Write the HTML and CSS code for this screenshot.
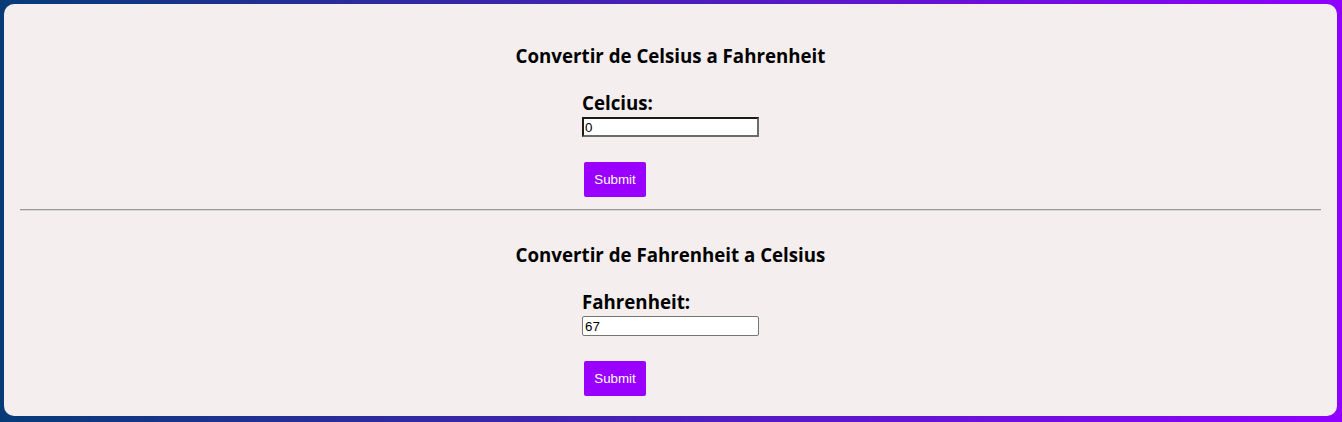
FILE: index.html
```html
<!DOCTYPE html>
<html lang="es">
<head>
<meta charset="utf-8">
<title>Conversor de temperatura</title>
<link rel="stylesheet" href="styles.css">
</head>
<body>
<main class="card">
  <section class="conv">
    <h2 class="conv-title">Convertir de Celsius a Fahrenheit</h2>
    <form class="conv-form">
      <label class="conv-label" for="celsius">Celcius:</label>
      <input class="conv-input conv-input-focus" id="celsius" type="text" value="0">
      <button class="conv-btn" type="button">Submit</button>
    </form>
  </section>
  <hr class="divider">
  <section class="conv">
    <h2 class="conv-title">Convertir de Fahrenheit a Celsius</h2>
    <form class="conv-form">
      <label class="conv-label" for="fahrenheit">Fahrenheit:</label>
      <input class="conv-input" id="fahrenheit" type="text" value="67">
      <button class="conv-btn" type="button">Submit</button>
    </form>
  </section>
</main>
</body>
</html>
```
FILE: styles.css
```css
html, body {
  margin: 0;
  height: 100%;
}
body {
  background: linear-gradient(to right, #063b78, #9000ff);
  padding: 4px 5px 6px 4px;
  box-sizing: border-box;
  font-family: "Open Sans", "Noto Sans", sans-serif;
}
.card {
  background: #f4eeee;
  border-radius: 10px;
  padding: 38px 16px 20px;
}
.conv-title {
  margin: 0;
  font-size: 18.7px;
  line-height: 28px;
  font-weight: 700;
  text-align: center;
  color: #000;
}
.conv-form {
  width: 177px;
  margin: 19px auto 0;
  display: flex;
  flex-direction: column;
  align-items: flex-start;
}
.conv-label {
  font-size: 18.7px;
  line-height: 28px;
  font-weight: 700;
  color: #000;
}
.conv-input {
  box-sizing: border-box;
  width: 177px;
  height: 20px;
  margin: 0;
  padding: 0 2px;
  border: 1px solid #767676;
  border-radius: 2px;
  background: #fff;
  font-family: "Liberation Sans", Arial, sans-serif;
  font-size: 13.33px;
  color: #000;
  outline: none;
}
.conv-input-focus {
  border: 2px solid #6b6b6b;
  border-top-color: #1b1b1b;
  border-left-color: #1b1b1b;
  border-radius: 0;
  padding: 0 1px;
}
.conv-btn {
  margin: 25px 0 0 2px;
  width: 62px;
  height: 35px;
  border: none;
  border-radius: 2px;
  background: #9900ff;
  color: #fff;
  font-family: "Liberation Sans", Arial, sans-serif;
  font-size: 13.33px;
  padding: 0;
}
.divider {
  margin: 12px 0 30px;
  border: none;
  border-top: 1px solid #9a9a9a;
  border-bottom: 1px solid #dcd6d6;
  height: 0;
}
```
